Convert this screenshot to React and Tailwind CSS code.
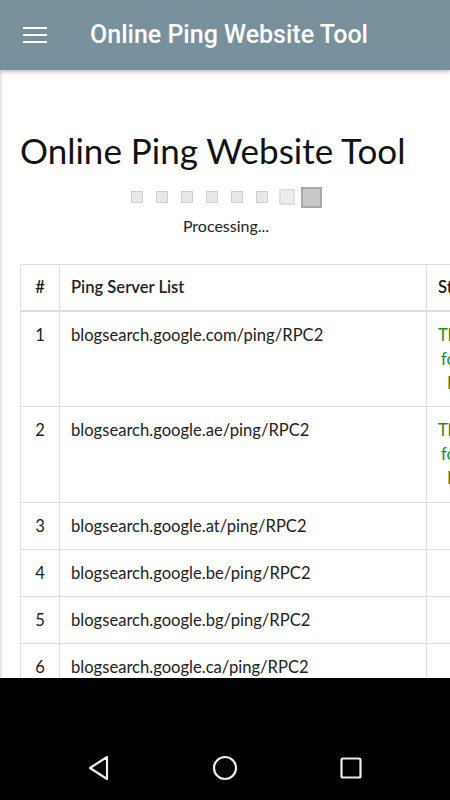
import React from "react";

const rows = [
  { n: 1, url: "blogsearch.google.com/ping/RPC2", ok: true },
  { n: 2, url: "blogsearch.google.ae/ping/RPC2", ok: true },
  { n: 3, url: "blogsearch.google.at/ping/RPC2" },
  { n: 4, url: "blogsearch.google.be/ping/RPC2" },
  { n: 5, url: "blogsearch.google.bg/ping/RPC2" },
  { n: 6, url: "blogsearch.google.ca/ping/RPC2" },
];

const Squares = () => (
  <div className="flex items-center justify-center h-[22px]">
    <div className="flex items-center gap-[13px]">
      {Array.from({ length: 6 }, (_, i) => (
        <div key={i} className="w-[12px] h-[12px] bg-[#e8e8e8] border border-[#cfcfcf]" />
      ))}
    </div>
    <div className="ml-[11px] w-[16px] h-[16px] bg-[#ececec] border-2 border-[#e0e0e0]" />
    <div className="ml-[6px] w-[21px] h-[21px] bg-[#c8c8c8] border-2 border-[#a9a9a9]" />
  </div>
);

export default function App() {
  return (
    <div className="w-[450px] h-[800px] flex flex-col bg-white overflow-hidden" style={{ fontFamily: "Lato, 'Open Sans', sans-serif" }}>
      <div className="h-[70px] shrink-0 bg-[#78909c] flex items-center shadow-[0_2px_4px_rgba(0,0,0,0.25)] relative z-10">
        <svg width="24" height="16" viewBox="0 0 24 16" className="ml-[23px]">
          <rect x="0" y="0" width="24" height="2" fill="white" />
          <rect x="0" y="7" width="24" height="2" fill="white" />
          <rect x="0" y="14" width="24" height="2" fill="white" />
        </svg>
        <span className="ml-[43px] text-white text-[25px] font-medium" style={{ fontFamily: "Roboto, sans-serif" }}>
          Online Ping Website Tool
        </span>
      </div>

      <div className="flex-1 overflow-hidden border-l-2 border-[#e6e6e6] text-[#222]">
        <h1 className="mt-[58px] ml-[18px] text-[35px] leading-[44px] font-normal whitespace-nowrap text-[#111]">
          Online Ping Website Tool
        </h1>
        <div className="mt-[14px]">
          <Squares />
        </div>
        <div className="text-center text-[16px] leading-[24px] mt-[6px]">Processing...</div>

        <div className="mt-[26px] ml-[18px] w-[520px]">
          <table className="table-fixed border-collapse text-[16.6px] leading-[24px]">
            <colgroup>
              <col className="w-[39px]" />
              <col className="w-[367px]" />
              <col className="w-[110px]" />
            </colgroup>
            <thead>
              <tr className="h-[46px]">
                <th className="border border-[#ddd] border-b-2 font-semibold text-center px-0">#</th>
                <th className="border border-[#ddd] border-b-2 font-semibold text-left pl-[11px]">Ping Server List</th>
                <th className="border border-[#ddd] border-b-2 font-semibold text-left pl-[11px]">Status</th>
              </tr>
            </thead>
            <tbody>
              {rows.map((r) => (
                <tr key={r.n} className={r.ok ? "h-[96px]" : "h-[45px]"}>
                  <td className="border border-[#ddd] text-center align-top py-[11px]">{r.n}</td>
                  <td className="border border-[#ddd] align-top pl-[11px] py-[11px] whitespace-nowrap">{r.url}</td>
                  <td className="border border-[#ddd] align-top text-left pl-[11px] py-[11px] text-[#1e8a1e] whitespace-nowrap">
                    {r.ok ? (
                      <>
                        <span className="block">Thanks for</span>
                        <span className="block pl-[3px]">following</span>
                        <span className="block pl-[9px]">Ping</span>
                      </>
                    ) : null}
                  </td>
                </tr>
              ))}
            </tbody>
          </table>
        </div>
      </div>

      <div className="h-[122px] shrink-0 bg-black flex items-end justify-center gap-[101px] pb-[19px]">
        <svg width="24" height="26" viewBox="0 0 24 26">
          <path d="M20 2 L3 13 L20 24 Z" fill="none" stroke="#eee" strokeWidth="2.2" strokeLinejoin="round" />
        </svg>
        <svg width="26" height="26" viewBox="0 0 26 26">
          <circle cx="13" cy="13" r="11" fill="none" stroke="#eee" strokeWidth="2.2" />
        </svg>
        <svg width="24" height="24" viewBox="0 0 24 24" className="mb-[1px]">
          <rect x="2.5" y="2.5" width="19" height="19" rx="1.5" fill="none" stroke="#eee" strokeWidth="2.2" />
        </svg>
      </div>
    </div>
  );
}
